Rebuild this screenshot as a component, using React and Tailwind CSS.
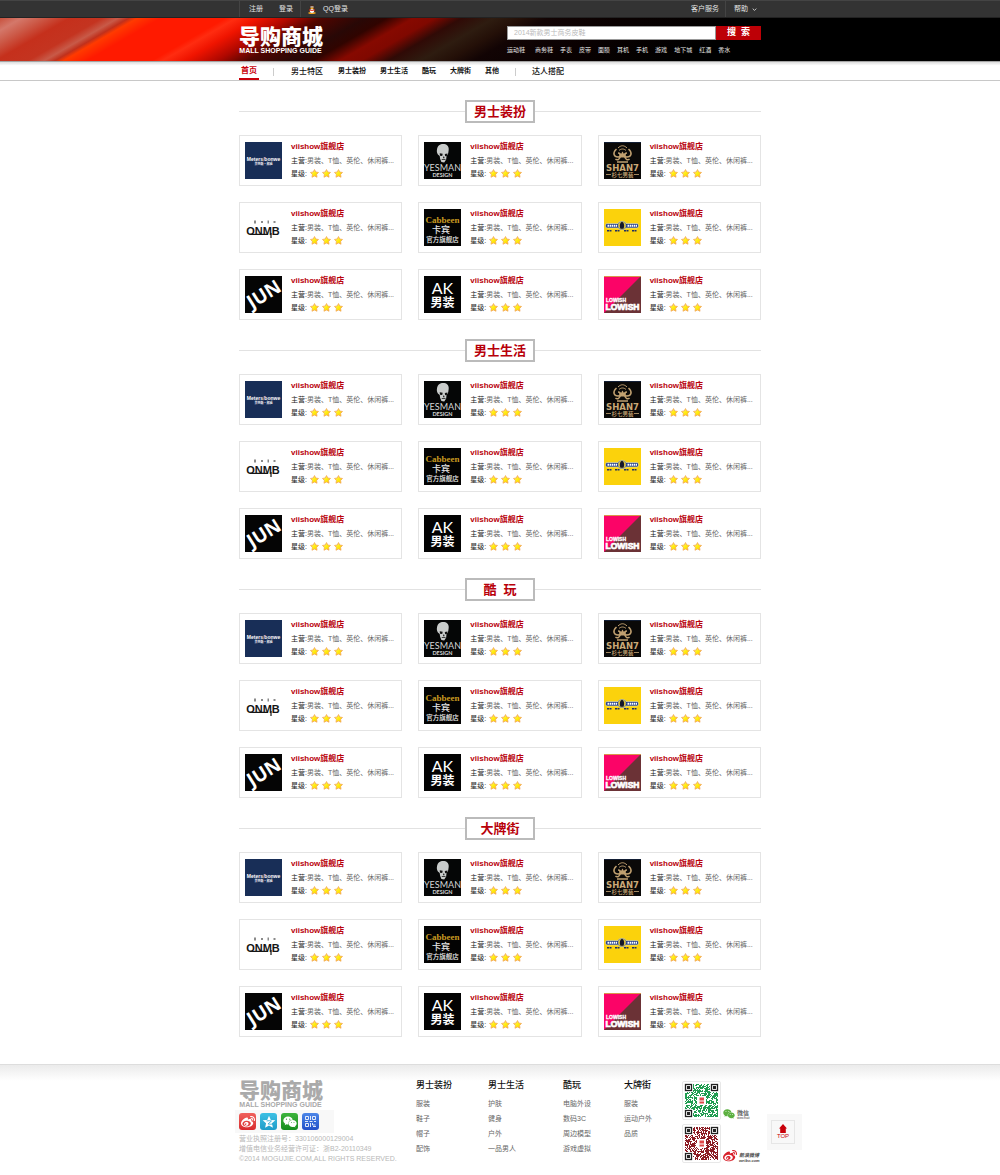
import { useId } from "react";
import { FaWeibo, FaWeixin } from "react-icons/fa";

const SANS = "font-['Liberation_Sans','Noto_Sans_CJK_SC',sans-serif]";

const categories = ["男士装扮", "男士生活", "酷\u00a0\u00a0玩", "大牌街"];

const hotWords = ["商务鞋", "手表", "皮带", "面膜", "耳机", "手机", "游戏", "地下城", "红酒", "香水"];

const footerColumns = [
  { title: "男士装扮", width: "w-[72px]", items: ["服装", "鞋子", "帽子", "配饰"] },
  { title: "男士生活", width: "w-[75px]", items: ["护肤", "健身", "户外", "一品男人"] },
  { title: "酷玩", width: "w-[61px]", items: ["电脑外设", "数码3C", "周边模型", "游戏虚拟"] },
  { title: "大牌街", width: "w-[58px]", items: ["服装", "运动户外", "品质"] },
];

function Brand({ label, bg, children }) {
  return (
    <svg viewBox="0 0 37 37" className="size-[37px] shrink-0" role="img" aria-label={label}>
      <rect width="37" height="37" fill={bg} />
      {children}
    </svg>
  );
}

const cjk = "Noto Sans CJK SC, sans-serif";
const latin = "Liberation Sans, sans-serif";

function Metersbonwe() {
  return (
    <Brand label="Metersbonwe" bg="#182e57">
      <text x="18.5" y="19" fontSize="5" fontWeight="700" fill="#fff" textAnchor="middle" fontFamily={latin}>
        Meters<tspan fill="#f0a070">/</tspan>bonwe
      </text>
      <text x="18.5" y="22.5" fontSize="3" fontWeight="700" fill="#fff" textAnchor="middle" fontFamily={cjk}>美特斯·邦威</text>
    </Brand>
  );
}

function Yesman() {
  return (
    <Brand label="Yesman Design" bg="#050606">
      <path d="M13 7.500c.5-4.500 4-6 7.300-5.500c3.400.5 5 3.500 4.300 6.700c-.3 1.600-.2 2.200-.8 3.800l-1.300 1.500l-.3 3.600l-2 2.900l-2.800-.4l-1.300-3.400l-.4-2.800l-1.800-1.400c-1-1.600-1.300-3.500-.9-5z" fill="#c9cccb" />
      <path d="M15.700 11.200l3 .6l-.5 2.300l-2.200-.4zM20.800 12l2.700-.4l-.3 2.100l-2.100.5zM19.300 14.400l.8 0l.5 1.800l-1.500 0zM17.500 17.200l4.200 0l-.3.9l-3.400 0z" fill="#111" />
      <text x="18.500" y="28.500" fontSize="9" fill="#d4d6d6" textAnchor="middle" fontFamily="Lato, sans-serif">YESMAN</text>
      <text x="18.500" y="35" fontSize="5.500" fontWeight="700" fill="#d4d6d6" textAnchor="middle" fontFamily="Lato, sans-serif">DESIGN</text>
    </Brand>
  );
}

function Shan7() {
  return (
    <Brand label="杉七男装" bg="#0a0908">
      <path d="M0 0h37" stroke="#1b3560" />
      <g fill="none" stroke="#c0a070" strokeWidth="1.500">
        <path d="M14 6c3-3 6-3 9 0M15 8.500c2-2 5-2 7 0" strokeWidth="1" />
        <path d="M12.500 7c-4.500 4-2.500 8 1.500 8c3 0 3-4 0-4M24.500 7c4.500 4 2.500 8-1.500 8c-3 0-3-4 0-4M11.500 17c2 2 4.500 0 5-3M25.500 17c-2 2-4.500 0-5-3M13 20h11" />
      </g>
      <path d="M15 10.500l2 1.500l1.500-2.500l1.500 2.500l2-1.500l-1 5h-5z" fill="#c0a070" />
      <text x="18.500" y="28.500" fontSize="8.500" fontWeight="700" fill="#c9a877" textAnchor="middle" fontFamily="DejaVu Sans, sans-serif">SHAN7</text>
      <text x="18.500" y="34.500" fontSize="5.500" fontWeight="500" fill="#c9a877" textAnchor="middle" fontFamily={cjk}>杉七男装</text>
      <path d="M2 32.500h5M30 32.500h5" stroke="#c9a877" strokeWidth=".8" />
    </Brand>
  );
}

function Onmb() {
  return (
    <Brand label="ONMB" bg="#fff">
      <path d="M9 11.500h2v3h-2zM16 12h2v2h-2zM22.500 11.500h1.500v3h-1.500zM28.500 12h2v2h-2z" fill="#8a8a8a" />
      <text x="18" y="26" fontSize="11" fontWeight="700" fill="#161616" textAnchor="middle" fontFamily={latin}>ONMB</text>
      <path d="M5 25.400h18M26 24v5" stroke="#161616" strokeWidth="1.200" />
    </Brand>
  );
}

function Cabbeen() {
  return (
    <Brand label="Cabbeen 卡宾" bg="#030303">
      <text x="18.500" y="13.500" fontSize="9" fontWeight="700" fill="#c79a20" textAnchor="middle" fontFamily="Liberation Serif, serif">Cabbeen</text>
      <text x="17" y="24" fontSize="9" fontWeight="500" fill="#e6e6e6" textAnchor="middle" fontFamily={cjk}>卡宾</text>
      <text x="18.500" y="33" fontSize="6.500" fontWeight="500" fill="#eee" textAnchor="middle" fontFamily={cjk}>官方旗舰店</text>
    </Brand>
  );
}

function YellowBadge() {
  return (
    <Brand label="Yellow badge" bg="#fbd20c">
      <path d="M3 14.500h11c1-3 7-3 8 0h11c2 0 2 4.500 0 4.500h-11c-1.500 2.500-6.500 2.500-8 0h-11c-2 0-2-4.500 0-4.500z" fill="#26408c" stroke="#f4eeb0" strokeWidth=".6" />
      <path d="M3.500 16.800h9.500M23.500 16.800h9.500" stroke="#fff" strokeWidth="2" strokeDasharray="1.500 .6" />
      <circle cx="18" cy="16.500" r="3.800" fill="#e8c830" stroke="#a8a888" strokeWidth=".8" />
      <path d="M18 12.800c2.600 1 2.600 5 1.400 7h-2.800c-1.200-2-1.200-6 1.400-7z" fill="#14182c" />
      <path d="M3 21.800h5M11 21.800h5M20 21.800h5M28 21.800h5" stroke="#223060" strokeWidth="1.600" strokeDasharray="2 .5" />
    </Brand>
  );
}

function Jun() {
  return (
    <Brand label="JUN" bg="#050505">
      <text x="19" y="25" fontSize="19" fontWeight="700" fill="#fff" textAnchor="middle" fontFamily="Open Sans, sans-serif" transform="rotate(-32 18.500 18.500)">JUN</text>
    </Brand>
  );
}

function Ak() {
  return (
    <Brand label="AK男装" bg="#030303">
      <text x="18.500" y="17.500" fontSize="16" fill="#fff" textAnchor="middle" fontFamily="Lato, sans-serif">AK</text>
      <text x="18.500" y="30.500" fontSize="12" fontWeight="700" fill="#fff" textAnchor="middle" fontFamily={cjk}>男装</text>
    </Brand>
  );
}

function Lowish() {
  return (
    <Brand label="Lowish" bg="#fb0467">
      <path d="M37 0v37H0z" fill="#6b3236" />
      <path d="M0 .5h37" stroke="#d9954a" />
      <text x="2" y="25.500" fontSize="5" fontWeight="700" fill="#fff" stroke="#fff" strokeWidth=".3" fontFamily={latin}>LOWISH</text>
      <text x="18.500" y="34" fontSize="8.500" fontWeight="700" fill="#fff" stroke="#fff" strokeWidth=".7" textAnchor="middle" fontFamily={latin}>LOWISH</text>
    </Brand>
  );
}

const brands = [Metersbonwe, Yesman, Shan7, Onmb, Cabbeen, YellowBadge, Jun, Ak, Lowish];

function Star() {
  const id = useId();
  return (
    <svg viewBox="0 0 20 20" className="size-[9px]" aria-hidden="true">
      <defs>
        <linearGradient id={id} x1="0" y1="0" x2="1" y2="1">
          <stop offset="0" stopColor="#fff68a" />
          <stop offset=".5" stopColor="#ffee10" />
          <stop offset="1" stopColor="#ffc400" />
        </linearGradient>
      </defs>
      <path d="M10 1.200l2.900 5.500l6 1l-4.200 4.400l.9 6.200l-5.600-2.700l-5.600 2.700l.9-6.200l-4.200-4.400l6-1z" fill={`url(#${id})`} stroke="#f2a458" strokeWidth="1.700" strokeLinejoin="round" />
    </svg>
  );
}

function ShopCard({ Logo }) {
  return (
    <article className="flex gap-[9px] border border-[#e4e4e4] pt-1 pr-1 pb-1.5 pl-[5px]">
      <div className="pt-[2px]">
        <Logo />
      </div>
      <div className="min-w-0 text-[7px]">
        <h3 className="text-[8px] leading-[14px] font-bold text-[#b8000a]">
          <a href="#shop">viishow旗舰店</a>
        </h3>
        <p className="leading-[14px] whitespace-nowrap text-[#666]">
          <span className="text-[#222]">主营:</span>男装、T恤、英伦、休闲裤...
        </p>
        <p className="flex items-center gap-[3px] leading-[11px] text-[#222]">
          星级:
          <Star />
          <Star />
          <Star />
        </p>
      </div>
    </article>
  );
}

function Section({ title }) {
  return (
    <section>
      <div className="flex items-center">
        <span className="h-px flex-1 bg-[#e2e2e2]" />
        <h2 className="h-[23px] w-[70px] border-2 border-[#bbb] text-center text-[13px] leading-[19px] font-bold text-[#b8000a]">{title}</h2>
        <span className="h-px flex-1 bg-[#e2e2e2]" />
      </div>
      <div className="mt-3 grid grid-cols-3 gap-4">
        {brands.map((Logo, i) => (
          <ShopCard key={i} Logo={Logo} />
        ))}
      </div>
    </section>
  );
}

function Wordmark({ color }) {
  return (
    <a href="#home" className={`block w-[83px] text-center ${color}`}>
      <span className="block text-[21px] leading-[21px] font-black whitespace-nowrap">导购商城</span>
      <span className="block text-[7px] leading-[7px] font-bold whitespace-nowrap">MALL SHOPPING GUIDE</span>
    </a>
  );
}

function qrPath(seed) {
  const n = 33;
  let s = seed;
  let d = "";
  for (let y = 0; y < n; y++) {
    for (let x = 0; x < n; x++) {
      s = (s * 1103515245 + 12345) % 2147483648;
      const finder = (x < 8 && y < 8) || (x > n - 9 && y < 8) || (x < 8 && y > n - 9);
      const center = x > 11 && x < 21 && y > 11 && y < 21;
      if (!finder && !center && (s >> 16) % 100 < 60) d += `M${x} ${y}h1v1h-1z`;
    }
  }
  return d;
}

function QrCode({ color, seed, label }) {
  return (
    <svg viewBox="-2 -2 37 37" className="size-[39px] rounded-xs border border-[#e8e8e8] bg-white" role="img" aria-label={label}>
      <path d={qrPath(seed)} fill={color} />
      {[[0, 0], [26, 0], [0, 26]].map(([x, y]) => (
        <g key={`${x}-${y}`}>
          <rect x={x + 0.5} y={y + 0.5} width="6" height="6" fill="#fff" stroke="#222" strokeWidth="1.300" />
          <rect x={x + 2} y={y + 2} width="3" height="3" fill="#222" />
        </g>
      ))}
      <path d="M14.500 13.500h4.500v3h-4.500zM14.500 17.500h4.500v2h-4.500z" fill="#e0484a" />
    </svg>
  );
}

function Penguin() {
  return (
    <svg viewBox="0 0 16 18" className="h-[9px] w-[8px]" aria-hidden="true">
      <ellipse cx="8" cy="16" rx="7.500" ry="2" fill="#f5a51d" />
      <path d="M8 0c3 0 4.500 2.500 4.500 5.500c1.500 2 3 5 2.500 7.500l-2-1.500c-.5 3-2 4.500-5 4.500s-4.500-1.500-5-4.500l-2 1.500c-.5-2.500 1-5.500 2.500-7.500c0-3 1.500-5.500 4.500-5.500z" fill="#4a2a18" />
      <ellipse cx="8" cy="12" rx="4.500" ry="4" fill="#fff" />
      <circle cx="6.300" cy="4" r="1.600" fill="#fff" />
      <circle cx="9.700" cy="4" r="1.600" fill="#fff" />
      <ellipse cx="8" cy="6.500" rx="3.200" ry="1.500" fill="#ffb21e" />
      <path d="M2.500 8.500c3 1.700 8 1.700 11 0v2.600c-3 1.300-8 1.300-11 0z" fill="#e5392c" />
    </svg>
  );
}

const tile = "flex size-[17px] items-center justify-center rounded-[3px] bg-linear-to-b text-white";

export default function App() {
  return (
    <div className={`min-h-[1175px] bg-white text-[7px] text-[#222] ${SANS}`}>
      <div className="border-t border-b border-[#444] border-b-[#222] bg-[#333]">
        <div className="mx-auto flex h-4 max-w-[522px] items-center justify-between text-[#e4e4e4]">
          <div className="flex h-full items-center">
            <div className="flex h-full items-center gap-4 border-x border-[#444] pr-[7px] pl-[9px]">
              <a href="#register">注册</a>
              <a href="#login">登录</a>
            </div>
            <a href="#qq" className="flex items-center gap-[7px] pl-[7px]">
              <Penguin />
              QQ登录
            </a>
          </div>
          <div className="flex h-full items-center">
            <a href="#service" className="pr-1.5">客户服务</a>
            <button type="button" className="flex h-full items-center gap-1 border-l border-[#444] pr-1 pl-2">
              帮助
              <svg viewBox="0 0 8 5" className="h-[3px] w-[5px]" fill="none" stroke="currentColor" strokeWidth="1.400" aria-hidden="true">
                <path d="M1 1l3 3l3-3" />
              </svg>
            </button>
          </div>
        </div>
      </div>

      <header className="bg-[linear-gradient(150deg,#c8503c_0%,#d4786a_2%,#cc5a48_4%,#c5301c_6.500%,#c43420_9.500%,#c85a48_11%,#c0301c_12%,#ff3a00_12.800%,#ff1a00_15%,#ff1a00_21%,#ff2c10_22%,#f01400_24%,#b00800_27%,#500500_30%,#280806_34%,#300400_36%,#860900_38.500%,#800800_40.500%,#300a06_43%,#2e1c10_46%,#241008_48.500%,#120404_51%,#0a0101_58%,#000_70%)]">
        <div className="mx-auto flex h-[43px] max-w-[522px] items-start justify-between">
          <div className="pt-2">
            <Wordmark color="text-white" />
          </div>
          <div className="w-[254px] pt-2">
            <form className="flex h-[14px]" onSubmit={(e) => e.preventDefault()}>
              <input
                type="text"
                aria-label="搜索商品"
                placeholder="2014新款男士商务皮鞋"
                className="min-w-0 flex-1 border border-[#999] bg-white px-1.5 text-[7px] text-[#333] outline-none placeholder:text-[#bbb]"
              />
              <button type="submit" className="w-[45px] bg-[#bd0006] text-[9px] font-bold whitespace-pre text-white">搜&nbsp;&nbsp;索</button>
            </form>
            <div className="flex gap-[7px] pt-1 text-[6px] leading-[12px] whitespace-nowrap text-[#e4e4e4]">
              <a href="#hot" className="mr-[3px]">运动鞋</a>
              {hotWords.map((w) => (
                <a key={w} href="#hot">{w}</a>
              ))}
            </div>
          </div>
        </div>
      </header>

      <nav className="border-t border-b border-t-[#a4a4a4] border-b-[#c8c8c8] bg-linear-to-b from-[#dcdcdc] to-white to-20%">
        <div className="mx-auto flex h-[18px] max-w-[522px] items-center pt-px font-bold whitespace-nowrap text-[#111]">
          <a href="#home" className="flex h-full items-center border-b-2 border-[#c8000a] px-[2px] text-[8px] text-[#c8000a]">首页</a>
          <span className="ml-3.5 h-2 w-px bg-[#ccc]" />
          <a href="#zone" className="ml-[17px] text-[8px] font-medium">男士特区</a>
          <div className="ml-[15px] flex gap-3.5">
            <a href="#c1">男士装扮</a>
            <a href="#c2">男士生活</a>
            <a href="#c3">酷玩</a>
            <a href="#c4">大牌街</a>
            <a href="#c5">其他</a>
          </div>
          <span className="ml-4 h-2 w-px bg-[#ccc]" />
          <a href="#match" className="ml-4 text-[8px] font-medium">达人搭配</a>
        </div>
      </nav>

      <main className="mx-auto flex max-w-[522px] flex-col gap-[19px] pt-[19px] pb-[27px]">
        {categories.map((c) => (
          <Section key={c} title={c} />
        ))}
      </main>

      <footer className="border-t border-[#ddd] bg-linear-to-b from-[#ebebeb] to-white to-[16px]">
        <div className="relative mx-auto flex max-w-[522px] items-start pt-[15px]">
          <div className="w-[177px] shrink-0 whitespace-nowrap">
            <Wordmark color="text-[#aaa]" />
            <div className="mt-[2px] -ml-1 flex w-[99px] gap-1 bg-[#f8f8f8] px-1 py-[3px]">
              <a href="#weibo" aria-label="微博" className={`${tile} from-[#f0605c] to-[#d8282c]`}>
                <FaWeibo className="size-[14px]" />
              </a>
              <a href="#qzone" aria-label="QQ空间" className={`${tile} from-[#3cc0e4] to-[#1e9cc8]`}>
                <svg viewBox="0 0 20 20" className="size-[14px]" fill="currentColor" aria-hidden="true">
                  <path d="M10 1l2.600 6l6.400.6l-4.800 4.300l1.400 6.300l-5.600-3.300l-5.600 3.300l1.400-6.300l-4.800-4.300l6.400-.6z" />
                  <path d="M6.500 8.500c3-.6 5-.4 7 .1l-5 4.200c2.500.6 5 .5 7.500-.1" fill="none" stroke="#2aa8d4" strokeWidth="1.200" />
                </svg>
              </a>
              <a href="#wechat" aria-label="微信" className={`${tile} from-[#3cb43c] to-[#148c1c]`}>
                <FaWeixin className="size-[14px]" />
              </a>
              <a href="#qr" aria-label="二维码" className={`${tile} from-[#4c86e8] to-[#2450c8]`}>
                <svg viewBox="0 0 13 13" className="size-[13px]" fill="none" stroke="currentColor" aria-hidden="true">
                  <path d="M1.500 1.500h3v3h-3zM8.500 1.500h3v3h-3zM1.500 8.500h3v3h-3zM6.500 1v4M1 6.500h3M5.500 6.500h3M10 6.500h2M6.500 8v4M8.500 8v2h3M9 11.500h3" opacity=".85" />
                </svg>
              </a>
            </div>
            <div className="mt-px leading-[10px] text-[#b8b8b8]">
              <p>营业执照注册号：330106000129004</p>
              <p>增值电信业务经营许可证：浙B2-20110349</p>
              <p>©2014 MOGUJIE.COM,ALL RIGHTS RESERVED.</p>
            </div>
          </div>

          {footerColumns.map((col) => (
            <div key={col.title} className={`shrink-0 ${col.width}`}>
              <h4 className="text-[9px] leading-[10px] font-medium text-[#111]">{col.title}</h4>
              <ul className="mt-1.5 leading-[15px] text-[#666]">
                {col.items.map((item) => (
                  <li key={item}>
                    <a href="#item">{item}</a>
                  </li>
                ))}
              </ul>
            </div>
          ))}

          <div className="flex shrink-0 flex-col gap-1 pt-px whitespace-nowrap">
            <div className="flex items-end gap-[2px]">
              <QrCode color="#1f9d50" seed={7} label="微信二维码" />
              <FaWeixin className="size-[12px] text-[#5cb040]" />
              <p className="text-[6px] leading-[6px] font-medium text-[#444]">
                微信<span className="block text-[4px] leading-[4px]">wechat</span>
              </p>
            </div>
            <div className="flex items-end gap-[2px]">
              <QrCode color="#8c1c24" seed={99} label="微博二维码" />
              <FaWeibo className="size-[14px] text-[#d8202a]" />
              <p className="text-[5px] leading-[6px] font-bold text-[#444] italic">
                新浪微博<span className="block text-[4px] leading-[5px]">weibo.com</span>
              </p>
            </div>
          </div>

          <div className="absolute top-[49px] left-full ml-1.5 bg-[#f8f8f8] pt-[6px] pr-[7px] pb-1.5 pl-1">
            <button type="button" className="flex size-6 flex-col items-center justify-center border border-[#e6e6e6] text-[6px] leading-[7px] text-[#c8000a]">
              <svg viewBox="0 0 8 9" className="h-[9px] w-[8px]" fill="currentColor" aria-hidden="true">
                <path d="M4 0l4 4.500h-1.200v4.500h-5.600v-4.500h-1.200z" />
              </svg>
              TOP
            </button>
          </div>
        </div>
      </footer>
    </div>
  );
}
